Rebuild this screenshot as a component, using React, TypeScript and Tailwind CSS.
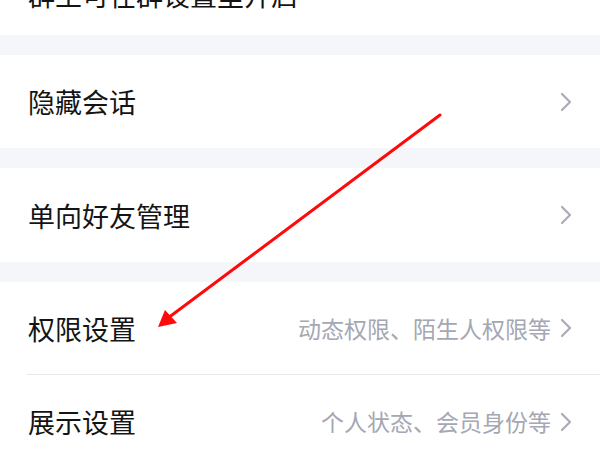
import React from 'react'

const font = "font-['Noto_Sans_CJK_SC','Noto_Sans',sans-serif]"

function Chevron() {
  return (
    <svg width="12" height="20" viewBox="0 0 12 20" className="shrink-0">
      <path d="M2 2 L10 10 L2 18" fill="none" stroke="#a9abb7" strokeWidth="2.2" strokeLinecap="round" strokeLinejoin="round" />
    </svg>
  )
}

function Row({ title, hint, h }: { title: string; hint?: string; h: string }) {
  return (
    <div className={`${h} flex items-center justify-between pl-[28px] pr-[28px] bg-white`}>
      <span className="text-[27px] leading-[27px] text-[#141414]">{title}</span>
      <div className="flex items-center gap-[9px]">
        {hint && <span className="text-[23px] leading-[23px] text-[#a5a7b2]">{hint}</span>}
        <Chevron />
      </div>
    </div>
  )
}

function Band() {
  return <div className="h-[20px] bg-[#f5f6fa]" />
}

export default function App() {
  return (
    <div className={`relative w-[600px] h-[450px] overflow-hidden bg-white ${font}`}>
      <div className="h-[35px] overflow-hidden pl-[28px]">
        <div className="mt-[-19px] text-[27px] leading-[27px] text-[#141414]">群主可在群设置里开启</div>
      </div>
      <Band />
      <Row title="隐藏会话" h="h-[93px]" />
      <Band />
      <Row title="单向好友管理" h="h-[94px]" />
      <Band />
      <Row title="权限设置" hint="动态权限、陌生人权限等" h="h-[92px]" />
      <div className="ml-[27px] h-px bg-[#e8e9ee]" />
      <Row title="展示设置" hint="个人状态、会员身份等" h="h-[93px]" />

      <svg className="absolute inset-0 pointer-events-none" width="600" height="450" viewBox="0 0 600 450">
        <line x1="440" y1="115" x2="168" y2="318" stroke="#ff0a0a" strokeWidth="3" strokeLinecap="round" />
        <polygon points="158,327 165,310 177,323" fill="#ff0a0a" />
      </svg>
    </div>
  )
}
